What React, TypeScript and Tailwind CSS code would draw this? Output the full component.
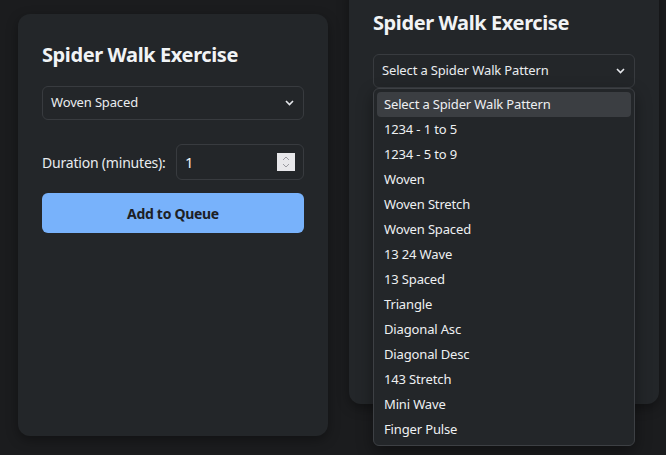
import React from 'react';

const PATTERNS = [
  'Select a Spider Walk Pattern',
  '1234 - 1 to 5',
  '1234 - 5 to 9',
  'Woven',
  'Woven Stretch',
  'Woven Spaced',
  '13 24 Wave',
  '13 Spaced',
  'Triangle',
  'Diagonal Asc',
  'Diagonal Desc',
  '143 Stretch',
  'Mini Wave',
  'Finger Pulse',
];

const Chevron = () => (
  <svg width="9" height="6" viewBox="0 0 9 6" fill="none" className="text-gray-200">
    <path d="M1 1l3.5 3.5L8 1" stroke="currentColor" strokeWidth="1.6" />
  </svg>
);

const Spinner = () => (
  <div className="w-[18px] h-[18px] bg-[#e7e7ea] flex flex-col items-center justify-center gap-[2px]">
    <svg width="8" height="5" viewBox="0 0 8 5" fill="none">
      <path d="M1 4l3-3 3 3" stroke="#9a9aa0" strokeWidth="1" />
    </svg>
    <svg width="8" height="5" viewBox="0 0 8 5" fill="none">
      <path d="M1 1l3 3 3-3" stroke="#9a9aa0" strokeWidth="1" />
    </svg>
  </div>
);

interface CardProps {
  value: string;
  open?: boolean;
}

const ExerciseCard: React.FC<CardProps> = ({ value, open }) => {
  return (
    <div className="w-[310px] h-[422px] shrink-0 rounded-xl bg-[#232629] px-6 pt-[27px] shadow-[0_4px_12px_rgba(0,0,0,0.35)]">
      <h2 className="text-[20px] leading-[28px] font-bold tracking-[-0.4px] text-[#f1f3f5]">Spider Walk Exercise</h2>

      <div className="relative mt-[17px]">
        <div className="h-[34px] rounded-md border border-[#383b3f] flex items-center justify-between pl-[8px] pr-[9px] text-[13px] tracking-[-0.15px] text-[#e9ecef]">
          <span>{value}</span>
          <Chevron />
        </div>

        {open && (
          <div className="absolute left-0 right-0 top-[34px] z-10 rounded-md border border-[#3d4044] bg-[#232629] p-[3px] shadow-[0_6px_16px_rgba(0,0,0,0.4)]">
            {PATTERNS.map((p, i) => (
              <div
                key={p}
                className={
                  i === 0
                    ? 'h-[25px] rounded-[4px] bg-[#3b3e42] px-[7px] flex items-center text-[13px] tracking-[-0.15px] text-[#eef0f2]'
                    : 'h-[25px] px-[7px] flex items-center text-[13px] tracking-[-0.15px] text-[#eef0f2]'
                }
              >
                {p}
              </div>
            ))}
          </div>
        )}
      </div>

      <div className="mt-[24px] flex items-center justify-between">
        <label className="text-[14px] tracking-[-0.2px] text-[#e9ecef]">Duration (minutes):</label>
        <div className="w-[128px] h-[36px] rounded-md border border-[#383b3f] flex items-center justify-between pl-[8px] pr-[8px]">
          <span className="text-[15px] text-[#f1f3f5]">1</span>
          <Spinner />
        </div>
      </div>

      <button className="mt-[13px] w-full h-[40px] rounded-md bg-[#78b2fb] text-[14px] font-bold tracking-[-0.3px] text-[#1d2024]">
        Add to Queue
      </button>
    </div>
  );
};

export default function App() {
  return (
    <div
      className="w-[666px] h-[455px] overflow-hidden bg-[#1b1c1e] flex items-start gap-[21px] pl-[18px]"
      style={{ fontFamily: '"Noto Sans", "Open Sans", sans-serif' }}
    >
      <div className="mt-[14px]">
        <ExerciseCard value="Woven Spaced" />
      </div>
      <div className="mt-[-18px]">
        <ExerciseCard value="Select a Spider Walk Pattern" open />
      </div>
    </div>
  );
}
